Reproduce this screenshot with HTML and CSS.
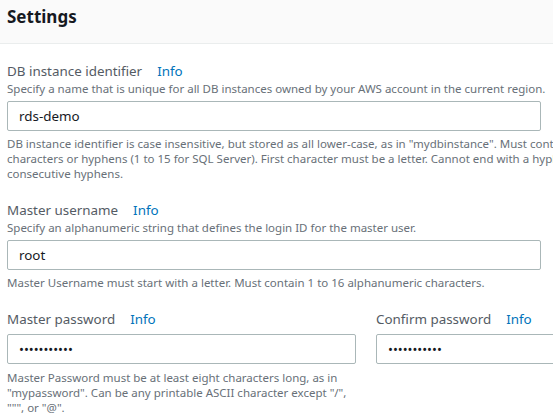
FILE: index.html
```html
<!DOCTYPE html>
<html>
<head>
<meta charset="utf-8">
<link rel="stylesheet" href="styles.css">
</head>
<body>
<div class="panel">
  <div class="header"><h2 class="title">Settings</h2></div>
  <div class="content">
    <div class="field">
      <div class="label-row"><span class="label">DB instance identifier</span><a class="info">Info</a></div>
      <div class="desc">Specify a name that is unique for all DB instances owned by your AWS account in the current region.</div>
      <div class="input wide">rds-demo</div>
      <div class="constraint nowrap">DB instance identifier is case insensitive, but stored as all lower-case, as in "mydbinstance". Must contain from 1 to 63 alphanumeric<br>characters or hyphens (1 to 15 for SQL Server). First character must be a letter. Cannot end with a hyphen or contain two<br>consecutive hyphens.</div>
    </div>
    <div class="field">
      <div class="label-row"><span class="label">Master username</span><a class="info">Info</a></div>
      <div class="desc">Specify an alphanumeric string that defines the login ID for the master user.</div>
      <div class="input wide">root</div>
      <div class="constraint">Master Username must start with a letter. Must contain 1 to 16 alphanumeric characters.</div>
    </div>
    <div class="cols">
      <div class="field col">
        <div class="label-row"><span class="label">Master password</span><a class="info">Info</a></div>
        <div class="input pw">•••••••••••</div>
        <div class="constraint">Master Password must be at least eight characters long, as in "mypassword". Can be any printable ASCII character except "/", """, or "@".</div>
      </div>
      <div class="field col">
        <div class="label-row"><span class="label">Confirm password</span><a class="info">Info</a></div>
        <div class="input pw">•••••••••••</div>
      </div>
    </div>
  </div>
</div>
</body>
</html>
```
FILE: styles.css
```css
html, body { margin: 0; padding: 0; background: #fff; }
body { width: 553px; height: 418px; overflow: hidden; font-family: "Noto Sans", sans-serif; }
.panel { width: 553px; }
.header { background: #fafafa; border-bottom: 1px solid #eaeded; height: 44px; padding: 0 7px; box-sizing: border-box; }
.title { margin: 0; font-size: 17px; font-weight: 700; color: #16191f; line-height: 33px; }
.content { padding: 18px 7px 0 7px; }
.field { margin-bottom: 20px; }
.field + .cols { margin-top: 4px; }
.label-row { display: flex; gap: 15px; align-items: baseline; line-height: 18px; white-space: nowrap; }
.label { font-size: 13.4px; color: #545b64; }
.info { font-size: 13.4px; color: #0073bb; font-weight: 400; }
.desc { font-size: 11.5px; color: #687078; line-height: 15px; margin-top: 1px; white-space: nowrap; }
.input { box-sizing: border-box; height: 30px; border: 1px solid #aab7b8; border-radius: 2px; padding: 0 11px; font-size: 13.4px; color: #16191f; line-height: 28px; margin-top: 5px; }
.cols .input { margin-top: 6px; }
.wide { width: 534px; }
.constraint { font-size: 11.5px; color: #687078; line-height: 15px; margin-top: 5px; }
.cols .constraint { margin-top: 6px; }
.nowrap { white-space: nowrap; }
.cols { display: flex; gap: 20px; width: 720px; }
.col { width: 349px; flex: none; }
.pw { font-size: 13px; letter-spacing: 0; }
```
